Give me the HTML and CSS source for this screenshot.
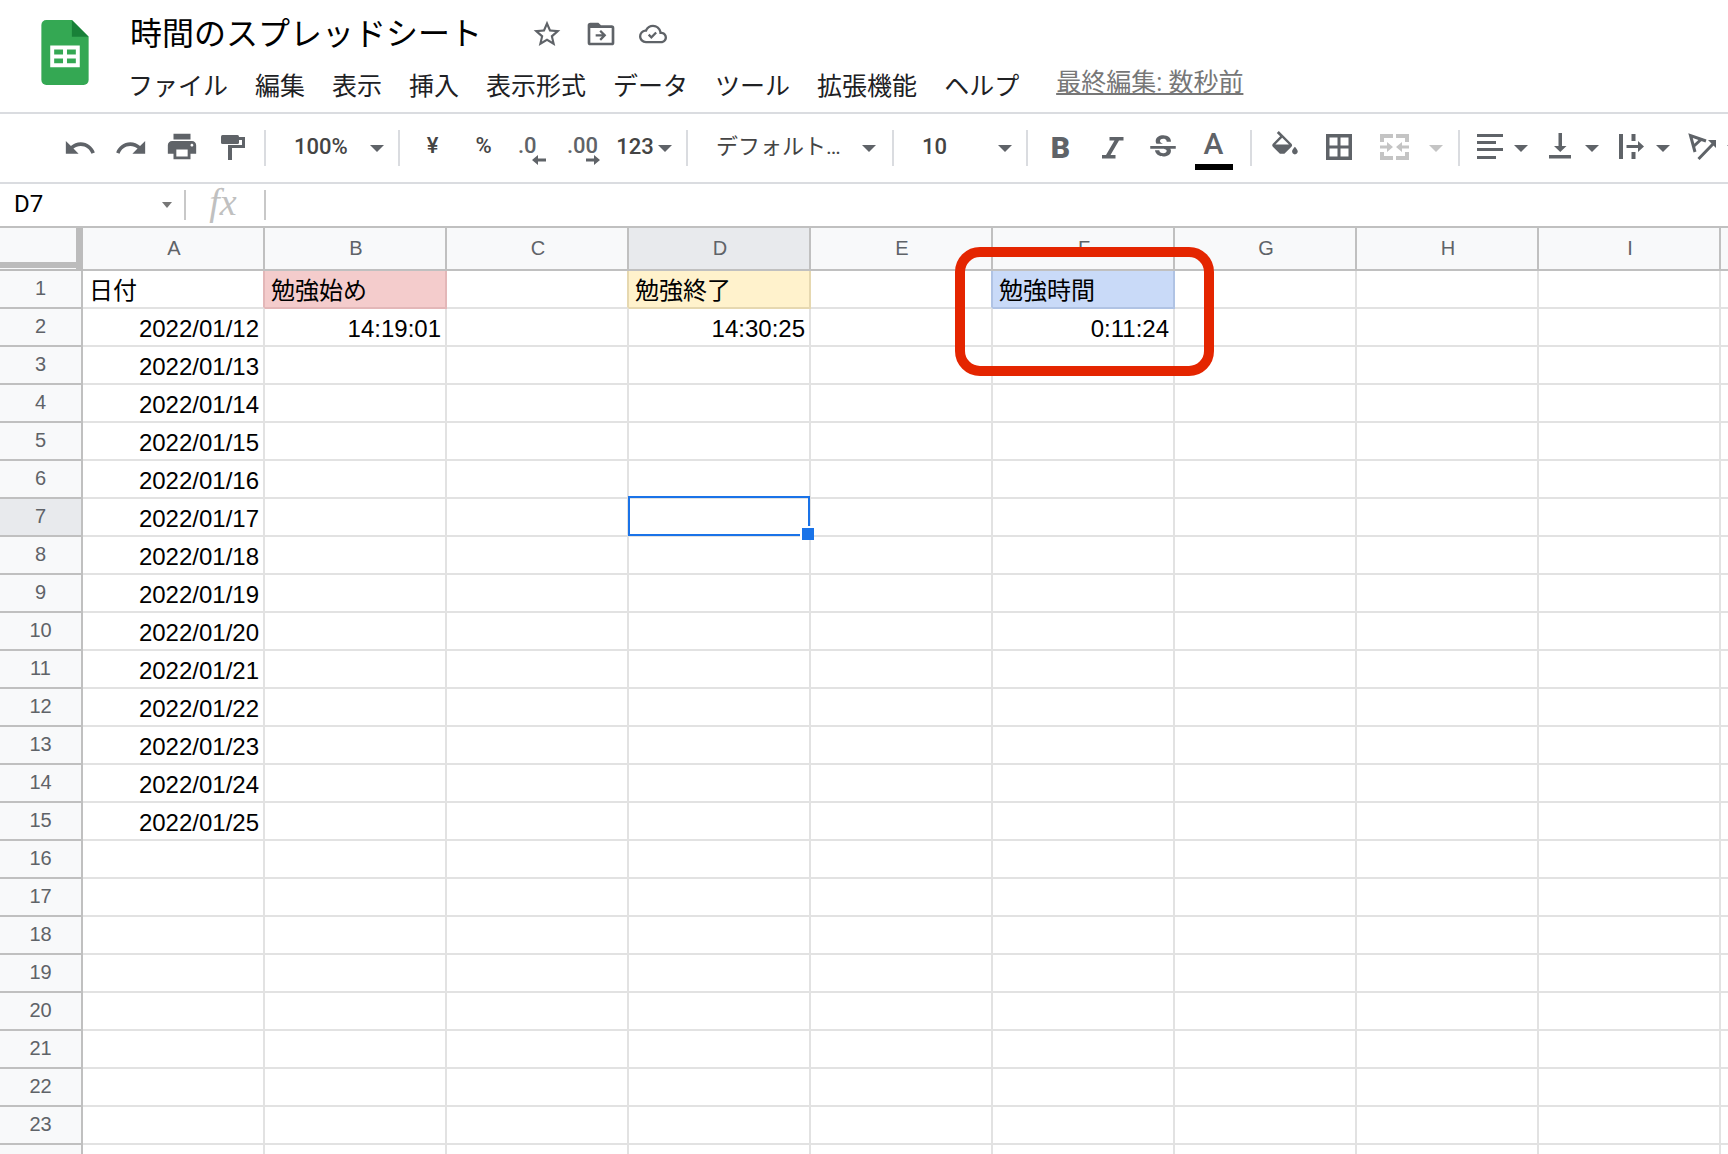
FILE: index.html
```html
<!DOCTYPE html>
<html lang="ja">
<head>
<meta charset="utf-8">
<title>時間のスプレッドシート</title>
<link rel="stylesheet" href="styles.css">
</head>
<body>
<header class="masthead">
  <a class="logo" href="#" aria-label="スプレッドシートのホーム">
    <svg width="48" height="65" viewBox="0 0 48 66"><path fill="#34a853" d="M5 0h26l17 17v44a5 5 0 0 1-5 5H5a5 5 0 0 1-5-5V5a5 5 0 0 1 5-5z"/><path fill="#188038" d="M31 0l17 17H31z"/><path fill="#fff" fill-rule="evenodd" d="M9 26h30v22H9zM13 30v5h9v-5zM26 30v5h9v-5zM13 39v5h9v-5zM26 39v5h9v-5z"/></svg>
  </a>
  <div class="heading">
    <div class="title-row">
      <h1 class="title">時間のスプレッドシート</h1>
      <button class="title-button" aria-label="スター"><svg width="32" height="32" viewBox="0 0 24 24"><path d="M22 9.24l-7.19-.62L12 2 9.19 8.63 2 9.24l5.46 4.73L5.82 21 12 17.27 18.18 21l-1.63-7.03L22 9.24zM12 15.4l-3.76 2.27 1-4.28-3.32-2.88 4.38-.38L12 6.1l1.71 4.04 4.38.38-3.32 2.88 1 4.28L12 15.4z"/></svg></button>
      <button class="title-button" aria-label="移動"><svg width="32" height="32" viewBox="0 0 24 24"><path fill-rule="evenodd" d="M4 3.500h6l2 2h8a2 2 0 0 1 2 2v11a2 2 0 0 1-2 2H4a2 2 0 0 1-2-2v-13a2 2 0 0 1 2-2zM4 7.500v11h16v-11zM12 9l4 4-4 4-1.2-1.2 1.9-1.9H8v-1.8h4.700l-1.9-1.9z"/></svg></button>
      <button class="title-button" aria-label="ドキュメントのステータス"><svg width="28" height="28" viewBox="0 0 24 24"><path d="M19.350 10.040A7.490 7.490 0 0 0 12 4C9.110 4 6.600 5.640 5.350 8.040A5.994 5.994 0 0 0 0 14c0 3.310 2.690 6 6 6h13c2.760 0 5-2.240 5-5 0-2.640-2.050-4.780-4.650-4.960zM19 18H6c-2.210 0-4-1.790-4-4s1.790-4 4-4h.710C7.370 7.690 9.480 6 12 6c3.040 0 5.500 2.460 5.500 5.500v.5H19c1.660 0 3 1.340 3 3s-1.340 3-3 3z"/><path d="M10.600 16.200l-3-3L9 11.800l1.600 1.600 3.400-3.400 1.400 1.400z"/></svg></button>
    </div>
    <nav class="menu">
      <button>ファイル</button><button>編集</button><button>表示</button><button>挿入</button><button>表示形式</button><button>データ</button><button>ツール</button><button>拡張機能</button><button>ヘルプ</button>
      <a class="last-edit" href="#">最終編集: 数秒前</a>
    </nav>
  </div>
</header>

<div class="toolbar" role="toolbar" aria-label="ツールバー">
  <div class="group history">
    <button class="tool" aria-label="元に戻す"><svg width="34" height="34" viewBox="0 0 24 24"><path d="M12.500 8c-2.650 0-5.050.990-6.900 2.600L2 7v9h9l-3.620-3.620c1.390-1.160 3.160-1.880 5.120-1.880 3.540 0 6.550 2.310 7.600 5.500l2.370-.780C21.080 11.030 17.150 8 12.500 8z"/></svg></button>
    <button class="tool" aria-label="やり直し"><svg width="34" height="34" viewBox="0 0 24 24"><path d="M18.400 10.600C16.550 8.990 14.150 8 11.500 8c-4.650 0-8.580 3.030-9.960 7.220L3.900 16c1.050-3.190 4.050-5.500 7.600-5.500 1.950 0 3.730.720 5.120 1.880L13 16h9V7l-3.600 3.600z"/></svg></button>
    <button class="tool" aria-label="印刷"><svg width="34" height="34" viewBox="0 1 24 24"><path d="M19 8H5c-1.660 0-3 1.340-3 3v6h4v4h12v-4h4v-6c0-1.660-1.340-3-3-3zm-3 11H8v-5h8v5zm3-7c-.550 0-1-.450-1-1s.450-1 1-1 1 .450 1 1-.450 1-1 1zm-1-9H6v4h12V3z"/></svg></button>
    <button class="tool" aria-label="書式を貼り付け"><svg width="34" height="34" viewBox="0 0 34 34"><rect x="5" y="4" width="18" height="9" rx="1.500"/><path d="M23 6h6v11H16v12h-4V14h14V9h-3z"/></svg></button>
  </div>
  <div class="group">
    <label class="picker zoom"><select aria-label="ズーム"><option>100%</option></select><svg class="caret" width="14" height="7" viewBox="0 0 14 7"><path d="M0 0h14L7 7z"/></svg></label>
  </div>
  <div class="group numbers">
    <button class="tool">¥</button>
    <button class="tool">%</button>
    <button class="tool decimal fewer" aria-label="小数点以下の桁数を減らす">.0<svg width="14" height="10" viewBox="0 0 14 10"><path d="M0 5l6-5v3.500h8v3H6V10z"/></svg></button>
    <button class="tool decimal more" aria-label="小数点以下の桁数を増やす">.00<svg width="14" height="10" viewBox="0 0 14 10"><path d="M14 5L8 0v3.500H0v3h8V10z"/></svg></button>
    <button class="tool formats"><span>123</span><svg class="caret" width="14" height="7" viewBox="0 0 14 7"><path d="M0 0h14L7 7z"/></svg></button>
  </div>
  <div class="group">
    <label class="picker family"><select aria-label="フォント"><option>デフォルト…</option></select><svg class="caret" width="14" height="7" viewBox="0 0 14 7"><path d="M0 0h14L7 7z"/></svg></label>
  </div>
  <div class="group">
    <label class="picker size"><select aria-label="フォントサイズ"><option>10</option></select><svg class="caret" width="14" height="7" viewBox="0 0 14 7"><path d="M0 0h14L7 7z"/></svg></label>
  </div>
  <div class="group letters">
    <button class="tool letter bold">B</button>
    <button class="tool" aria-label="斜体"><svg width="36" height="36" viewBox="0 0 36 36"><path d="M15.500 7H29.500v3.500h-4.500L16.500 25h5v3.500H8V25h4l8.500-14.500h-5z"/></svg></button>
    <button class="tool" aria-label="取り消し線"><svg width="34" height="34" viewBox="0 0 24 24"><path d="M6.850 7.080C6.850 4.370 9.450 3 12.240 3c1.640 0 3 .490 3.900 1.280.770.650 1.460 1.730 1.460 3.240h-3.010c0-.310-.050-.590-.150-.850-.290-.860-1.200-1.280-2.250-1.280-1.860 0-2.340 1.020-2.340 1.700 0 .480.250.880.740 1.210.380.250.770.480 1.410.700H7.390c-.210-.340-.540-.890-.540-1.920zM21 12.500v-2H3v2h9.620c1.150.450 1.960.550 1.960 1.470 0 1-.810 1.670-2.280 1.670-1.540 0-2.930-.540-2.930-2.010H6.400c0 .550.080.630.240 1.080.810 2.290 3.290 3.300 5.670 3.300 2.270 0 5.300-.890 5.300-4.050 0-.300-.010-.760-.480-1.460H21z"/></svg></button>
    <button class="tool letter color">A</button>
  </div>
  <div class="group cells">
    <button class="tool" aria-label="塗りつぶしの色"><svg width="34" height="34" viewBox="0 0 24 24"><path d="M16.560 8.940L7.620 0 6.210 1.410l2.380 2.380-5.150 5.150c-.590.590-.590 1.540 0 2.120l4.800 4.800c.290.290 3.230.290 3.520 0l4.800-4.800c.590-.580.590-1.530 0-2.120zM5.210 9.500L10 4.710 14.790 9.500H5.210zM19 11.200s-2 2.170-2 3.300c0 1.100.9 2 2 2s2-.9 2-2c0-1.130-2-3.300-2-3.300z"/></svg></button>
    <button class="tool" aria-label="枠線"><svg width="34" height="34" viewBox="0 0 34 34"><path fill-rule="evenodd" d="M4 3h26v26H4zM7.500 6.500v8h8v-8zM18.500 6.500v8h8v-8zM7.500 17.500v8h8v-8zM18.500 17.500v8h8v-8z"/></svg></button>
    <button class="tool" disabled aria-label="セルを結合"><svg width="34" height="34" viewBox="0 0 34 34"><path d="M4 3h13v4H8v4H4zM20 3h13v8h-4V7h-9zM4 21h4v4h9v4H4zM29 21h4v8H20v-4h9zM4 14.500h7V11l6 5-6 5v-3.500H4zM33 14.500h-7V11l-6 5 6 5v-3.500h7z"/></svg></button>
    <button class="tool narrow" disabled aria-label="結合の種類"><svg class="caret" width="14" height="7" viewBox="0 0 14 7"><path d="M0 0h14L7 7z"/></svg></button>
  </div>
  <div class="group layout">
    <button class="tool menu-tool" aria-label="水平方向の配置"><svg width="32" height="32" viewBox="0 0 32 32"><path d="M3 2h26v3H3zM3 9h19v3H3zM3 16h26v3H3zM3 24h19v3H3z"/></svg><svg class="caret" width="14" height="7" viewBox="0 0 14 7"><path d="M0 0h14L7 7z"/></svg></button>
    <button class="tool menu-tool" aria-label="垂直方向の配置"><svg width="32" height="32" viewBox="0 0 32 32"><path d="M13.500 1h3.500v13h4.500l-6.250 6L9 14h4.500zM4 23h22v3.500H4z"/></svg><svg class="caret" width="14" height="7" viewBox="0 0 14 7"><path d="M0 0h14L7 7z"/></svg></button>
    <button class="tool menu-tool" aria-label="テキストの折り返し"><svg width="32" height="32" viewBox="0 0 32 32"><path d="M3 2h4v25H3zM15.500 2h4v7h-4zM15.500 20h4v7h-4zM10.500 13H22V9l6 5.500-6 5.500v-4H10.500z"/></svg><svg class="caret" width="14" height="7" viewBox="0 0 14 7"><path d="M0 0h14L7 7z"/></svg></button>
    <button class="tool menu-tool" aria-label="テキストの回転"><svg width="32" height="32" viewBox="0 0 32 32"><path fill="none" stroke="#5f6368" stroke-width="3" d="M19 9L3.500 3.500 8 20M14 7.500L7 14M11.500 27L26 12"/><path d="M21 8h8v8z"/></svg><svg class="caret" width="14" height="7" viewBox="0 0 14 7"><path d="M0 0h14L7 7z"/></svg></button>
  </div>
</div>

<div class="formula-bar">
  <label class="name-box"><input value="D7" aria-label="名前ボックス"><svg width="10" height="6" viewBox="0 0 10 6"><path d="M0 0h10L5 6z"/></svg></label>
  <label class="fx" for="formula">fx</label>
  <input id="formula" class="formula" aria-label="数式">
</div>

<main class="sheet">
<table class="grid">
<colgroup><col class="numbers-col"><col span="10" class="data-col"></colgroup>
<thead>
<tr><td class="corner"><th>A<th>B<th>C<th class="current">D<th>E<th>F<th>G<th>H<th>I<th></tr>
</thead>
<tbody>
<tr><th>1<td class="text before-pink">日付<td class="text pink">勉強始め<td class="before-yellow"><td class="text yellow">勉強終了<td class="before-blue"><td class="text blue">勉強時間<span class="callout"></span><td><td><td><td></tr>
<tr><th>2<td>2022/01/12<td>14:19:01<td><td>14:30:25<td><td>0:11:24<td><td><td><td></tr>
<tr><th>3<td>2022/01/13<td><td><td><td><td><td><td><td><td></tr>
<tr><th>4<td>2022/01/14<td><td><td><td><td><td><td><td><td></tr>
<tr><th>5<td>2022/01/15<td><td><td><td><td><td><td><td><td></tr>
<tr><th>6<td>2022/01/16<td><td><td><td><td><td><td><td><td></tr>
<tr><th class="current">7<td>2022/01/17<td><td><td class="selected"><span class="selection"></span><td><td><td><td><td><td></tr>
<tr><th>8<td>2022/01/18<td><td><td><td><td><td><td><td><td></tr>
<tr><th>9<td>2022/01/19<td><td><td><td><td><td><td><td><td></tr>
<tr><th>10<td>2022/01/20<td><td><td><td><td><td><td><td><td></tr>
<tr><th>11<td>2022/01/21<td><td><td><td><td><td><td><td><td></tr>
<tr><th>12<td>2022/01/22<td><td><td><td><td><td><td><td><td></tr>
<tr><th>13<td>2022/01/23<td><td><td><td><td><td><td><td><td></tr>
<tr><th>14<td>2022/01/24<td><td><td><td><td><td><td><td><td></tr>
<tr><th>15<td>2022/01/25<td><td><td><td><td><td><td><td><td></tr>
<tr><th>16<td><td><td><td><td><td><td><td><td><td></tr>
<tr><th>17<td><td><td><td><td><td><td><td><td><td></tr>
<tr><th>18<td><td><td><td><td><td><td><td><td><td></tr>
<tr><th>19<td><td><td><td><td><td><td><td><td><td></tr>
<tr><th>20<td><td><td><td><td><td><td><td><td><td></tr>
<tr><th>21<td><td><td><td><td><td><td><td><td><td></tr>
<tr><th>22<td><td><td><td><td><td><td><td><td><td></tr>
<tr><th>23<td><td><td><td><td><td><td><td><td><td></tr>
<tr><th><td><td><td><td><td><td><td><td><td><td></tr>
</tbody>
</table>
</main>
</body>
</html>
```
FILE: styles.css
```css
* { box-sizing: border-box; }

body {
  margin: 0;
  height: 100vh;
  display: flex;
  flex-direction: column;
  overflow: hidden;
  background: #fff;
  color: #000;
  font-family: Roboto, "Noto Sans CJK JP", sans-serif;
}

button, input, select {
  margin: 0;
  padding: 0;
  border: 0;
  background: none;
  color: inherit;
  font: inherit;
  outline: 0;
}

svg { display: block; fill: #5f6368; flex: none; }

/* Title and menus */
.masthead {
  flex: none;
  display: flex;
  gap: 40px;
  height: 114px;
  padding: 10px 0 0 41px;
  border-bottom: 2px solid #dadce0;
}
.logo { padding-top: 10px; }
.title-row { display: flex; align-items: center; height: 48px; }
.title {
  margin: 0 49px 0 1px;
  font-size: 32px;
  line-height: 48px;
  font-weight: 400;
  white-space: nowrap;
}
.title-button { margin-right: 22px; }
.menu {
  display: flex;
  gap: 27px;
  margin-left: -1px;
  font-size: 25px;
  line-height: 36px;
  padding-top: 11px;
  white-space: nowrap;
  color: #202124;
}
.last-edit {
  margin: -4px 0 0 10px;
  color: #777;
  text-decoration: underline;
  text-decoration-thickness: 2px;
  text-underline-offset: 2px;
  text-decoration-skip-ink: none;
}

/* Toolbar */
.toolbar {
  flex: none;
  display: flex;
  align-items: center;
  height: 70px;
  overflow: hidden;
  border-bottom: 2px solid #dadce0;
  font-size: 22px;
  font-weight: 500;
  color: #444;
}
.group {
  flex: none;
  display: flex;
  height: 36px;
  border-right: 2px solid #dadce0;
}
.history { padding: 0 6px 0 54px; }
.numbers { padding: 0 9px 0 7px; }
.letters { padding: 0 11px 0 7px; }
.cells { padding: 0 8px 0 7px; gap: 3px; }
.layout { padding-left: 14px; gap: 17px; border: 0; }

.tool {
  display: flex;
  align-items: center;
  justify-content: center;
  width: 51px;
  height: 36px;
  line-height: 32px;
  padding-bottom: 4px;
}
.tool:has(> svg) { padding-bottom: 0; }
.tool:disabled svg { fill: #c4c4c4; }
.narrow { width: 29px; }
.menu-tool { width: auto; gap: 8px; }
.formats { width: 66px; gap: 4px; }
.formats span { padding-bottom: 2px; }

.tool.decimal {
  position: relative;
  justify-content: flex-start;
  padding: 0 0 4px 9px;
  color: #5f6368;
}
.tool.more { padding-left: 7px; }
.decimal svg { position: absolute; top: 25px; left: 23px; }
.more svg { left: 26px; }

.letter { font-size: 30px; color: #5f6368; }
.tool.bold { font-weight: 900; padding-bottom: 0; }
.tool.color { position: relative; padding-bottom: 8px; line-height: 28px; }
.color::after {
  content: "";
  position: absolute;
  left: 7px;
  top: 34px;
  width: 38px;
  height: 6px;
  background: #000;
}

.picker { display: grid; align-items: center; }
.picker > * { grid-area: 1 / 1; }
.picker select {
  appearance: none;
  width: 100%;
  height: 36px;
  padding: 0 28px 4px;
}
.picker .caret { justify-self: end; margin-right: 14px; pointer-events: none; }
.zoom, .size { width: 132px; }
.picker.family { width: 204px; font-weight: 400; }
.family .caret { margin-right: 16px; }

/* Name box and formula input */
.formula-bar {
  flex: none;
  display: flex;
  align-items: center;
  height: 44px;
  border-bottom: 2px solid #c0c0c0;
  font-size: 24px;
}
.name-box {
  display: flex;
  align-items: center;
  width: 186px;
  height: 30px;
  padding: 0 12px 0 14px;
  border-right: 2px solid #c8c8c8;
}
.name-box input { flex: 1; min-width: 0; height: 30px; padding-bottom: 2px; }
.name-box svg { fill: #777; }
.fx {
  width: 80px;
  height: 30px;
  padding-right: 4px;
  border-right: 2px solid #c8c8c8;
  text-align: center;
  font: italic 38px/24px "Liberation Serif", serif;
  color: #c0c0c0;
}
.formula { flex: 1; height: 30px; padding: 0 8px; }

/* Cells */
.sheet { flex: 1; min-height: 0; overflow: hidden; }
.grid {
  width: 1903px;
  table-layout: fixed;
  border-collapse: separate;
  border-spacing: 0;
  font-family: "Liberation Sans", "Noto Sans CJK JP", sans-serif;
}
.numbers-col { width: 83px; }
.data-col { width: 182px; }
.grid th {
  padding: 0 0 2px;
  background: #f8f9fa;
  border: solid #c0c0c0;
  border-width: 0 2px 2px 0;
  font-size: 20px;
  line-height: 24px;
  font-weight: 400;
  color: #5f6368;
}
.grid thead th { height: 43px; padding-left: 2px; }
.grid th.current { background: #e8eaed; }
.grid .corner {
  height: 43px;
  background: #f8f9fa;
  border: solid #bcbcbc;
  border-width: 0 7px 2px 0;
  box-shadow: inset 0 -1px #f8f9fa, inset 0 -7px #bcbcbc;
}
.grid td {
  height: 38px;
  padding: 0 4px 0 6px;
  border: solid #e2e2e2;
  border-width: 0 2px 2px 0;
  font-size: 24px;
  line-height: 32px;
  text-align: right;
  vertical-align: bottom;
  white-space: nowrap;
}
.grid .text { text-align: left; }
.grid .pink { background: #f4cccc; border-color: #e3b7b8; }
.grid .before-pink { border-right-color: #e3b7b8; }
.grid .yellow { background: #fff2cc; border-color: #e6d8b0; }
.grid .before-yellow { border-right-color: #e6d8b0; }
.grid .blue { position: relative; background: #c9daf8; border-color: #b0c3e4; }
.grid .before-blue { border-right-color: #b0c3e4; }

.callout {
  position: absolute;
  z-index: 2;
  left: -38px;
  top: -24px;
  width: 259px;
  height: 129px;
  border: 10px solid #e42500;
  border-radius: 25px;
}
.selected { position: relative; }
.selection {
  position: absolute;
  left: -1px;
  top: -3px;
  width: 182px;
  height: 40px;
  border: 2px solid #1a73e8;
}
.selection::after {
  content: "";
  position: absolute;
  right: -6px;
  bottom: -6px;
  width: 12px;
  height: 12px;
  background: #1a73e8;
  border: solid #fff;
  border-width: 2px 0 0 2px;
}
```
